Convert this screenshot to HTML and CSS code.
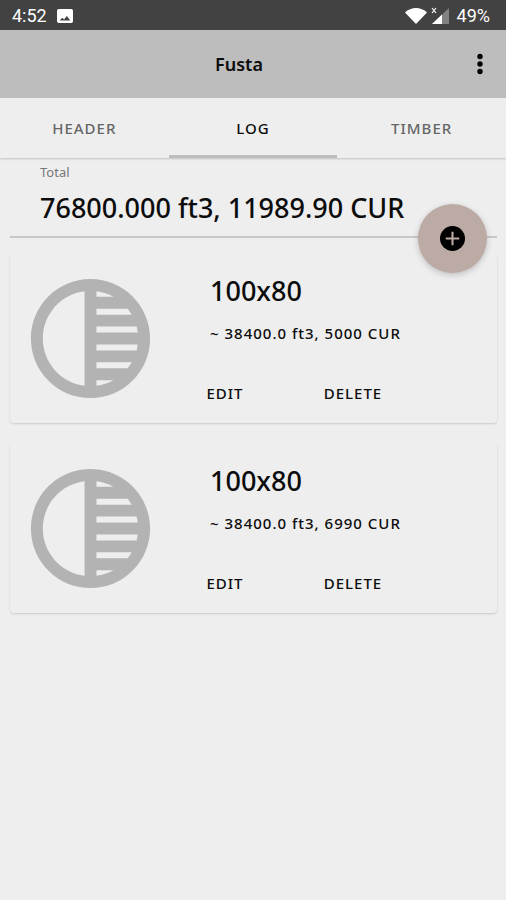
FILE: index.html
```html
<!DOCTYPE html>
<html lang="en">
<head>
<meta charset="utf-8">
<meta name="viewport" content="width=device-width, initial-scale=1">
<title>Fusta</title>
<link rel="stylesheet" href="styles.css">
</head>
<body>
<div class="status">
  <span>4:52</span>
  <svg class="status-photo" viewBox="0 0 18 18" aria-hidden="true"><path fill="#fff" fill-rule="evenodd" d="M2 1h14a2 2 0 0 1 2 2v12a2 2 0 0 1-2 2H2a2 2 0 0 1-2-2V3a2 2 0 0 1 2-2zm1 13h12l-4-5-3 4-2-2z"/></svg>
  <span class="status-space"></span>
  <svg class="status-wifi" viewBox="0 0 22 16" aria-hidden="true"><path fill="#fff" d="M11 16 0 4.500C6-1.500 16-1.500 22 4.500z"/></svg>
  <svg class="status-cell" viewBox="0 0 18 18" aria-hidden="true"><path fill="#828282" d="M18 1v16H1z"/><path fill="#fff" d="M11 7.600V17H1z"/><path stroke="#fff" stroke-width="1.200" d="m1 1 4 5M5 1 1 6"/></svg>
  <span>49%</span>
</div>
<header class="appbar">
  <h1>Fusta</h1>
  <button class="menu" type="button" aria-label="More options"><svg viewBox="0 0 6 22" aria-hidden="true"><circle cx="3" cy="3.500" r="2.700"/><circle cx="3" cy="11" r="2.700"/><circle cx="3" cy="18.500" r="2.700"/></svg></button>
</header>
<nav class="tabs">
  <a href="#header">HEADER</a>
  <a href="#log" class="active" aria-current="page">LOG</a>
  <a href="#timber">TIMBER</a>
</nav>
<main>
  <section class="total">
    <label for="total">Total</label>
    <input id="total" type="text" value="76800.000 ft3, 11989.90 CUR" readonly>
    <button class="add" type="button" aria-label="Add log"><svg viewBox="0 0 24 24" aria-hidden="true"><circle cx="12" cy="12" r="12"/><path stroke="#bcaaa4" stroke-width="2" d="M12 5.500v13M5.500 12h13"/></svg></button>
  </section>
  <article class="card">
    <svg class="tone" viewBox="0 0 24 24" aria-hidden="true"><path d="M12 2C6.480 2 2 6.480 2 12s4.480 10 10 10 10-4.480 10-10S17.520 2 12 2zm-1 17.930c-3.940-.490-7-3.850-7-7.930s3.050-7.440 7-7.930v15.860zm2-15.860c1.030.130 2 .450 2.870.930H13v-.930zM13 7h5.240c.250.310.480.650.680 1H13V7zm0 3h6.740c.080.330.150.660.190 1H13v-1zm0 9.930V19h2.870c-.870.480-1.840.800-2.870.930zM18.240 17H13v-1h5.920c-.200.350-.430.690-.680 1zm1.500-3H13v-1h6.930c-.040.340-.110.670-.190 1z"/></svg>
    <div class="info">
      <h2>100x80</h2>
      <p>~ 38400.0 ft3, 5000 CUR</p>
      <div class="actions"><button type="button">EDIT</button><button type="button">DELETE</button></div>
    </div>
  </article>
  <article class="card">
    <svg class="tone" viewBox="0 0 24 24" aria-hidden="true"><path d="M12 2C6.480 2 2 6.480 2 12s4.480 10 10 10 10-4.480 10-10S17.520 2 12 2zm-1 17.930c-3.940-.490-7-3.850-7-7.930s3.050-7.440 7-7.930v15.860zm2-15.860c1.030.130 2 .450 2.870.930H13v-.930zM13 7h5.240c.250.310.480.650.680 1H13V7zm0 3h6.740c.080.330.150.660.190 1H13v-1zm0 9.930V19h2.870c-.870.480-1.840.800-2.870.930zM18.240 17H13v-1h5.920c-.200.350-.430.690-.680 1zm1.500-3H13v-1h6.930c-.040.340-.110.670-.190 1z"/></svg>
    <div class="info">
      <h2>100x80</h2>
      <p>~ 38400.0 ft3, 6990 CUR</p>
      <div class="actions"><button type="button">EDIT</button><button type="button">DELETE</button></div>
    </div>
  </article>
</main>
</body>
</html>
```
FILE: styles.css
```css
* { box-sizing: border-box; }
body {
  margin: 0;
  min-height: 100vh;
  background: #eee;
  color: #0c0c0c;
  font-family: "Noto Sans", "Open Sans", sans-serif;
}
h1, h2, p { margin: 0; font-weight: 500; }
button { border: 0; padding: 0; background: none; color: inherit; font: inherit; cursor: pointer; }
svg { display: block; flex: none; }

.status {
  display: flex;
  align-items: center;
  height: 30px;
  padding: 2px 16px 0 12px;
  background: #424242;
  color: #fff;
  font: 18px/28px Roboto, sans-serif;
}
.status-photo { width: 16px; height: 16px; margin-left: 10px; }
.status-space { flex: 1; }
.status-wifi { width: 22px; height: 16px; }
.status-cell { width: 18px; height: 18px; margin: 0 8px 0 4px; }

.appbar {
  display: grid;
  grid-template-columns: 1fr auto 1fr;
  align-items: center;
  height: 68px;
  padding-right: 16px;
  background: #bdbdbd;
}
.appbar h1 { grid-column: 2; padding-right: 12px; font-size: 18px; font-weight: 600; line-height: 24px; }
.menu { justify-self: end; width: 20px; height: 40px; display: grid; place-items: center; }
.menu svg { width: 6px; height: 22px; }

.tabs {
  display: grid;
  grid-template-columns: repeat(3, 1fr);
  box-shadow: 0 1px 2px rgba(0, 0, 0, .2);
}
.tabs a {
  height: 60px;
  border-bottom: 3px solid transparent;
  color: #666;
  font-size: 15px;
  font-weight: 500;
  line-height: 60px;
  letter-spacing: 1px;
  text-align: center;
  text-decoration: none;
}
.tabs .active { border-color: #bdbdbd; color: #0c0c0c; }

main { display: flex; flex-direction: column; padding: 0 9px 0 10px; }
.total {
  position: relative;
  height: 80px;
  margin-bottom: 15px;
  padding: 4px 30px 0;
  border-bottom: 2px solid #c8c8c8;
}
.total label { display: block; color: #777; font-size: 13px; line-height: 20px; }
.total input {
  display: block;
  width: 100%;
  height: 40px;
  margin-top: 6px;
  padding: 0;
  border: 0;
  outline: 0;
  background: none;
  color: inherit;
  font: 500 27px/40px "Noto Sans", "Open Sans", sans-serif;
}
.add {
  position: absolute;
  right: 10px;
  bottom: -37px;
  display: grid;
  place-items: center;
  width: 69px;
  height: 69px;
  border-radius: 50%;
  background: #bcaaa4;
  box-shadow: 0 2px 6px rgba(0, 0, 0, .2);
}
.add svg { width: 25px; height: 25px; }

.card {
  display: flex;
  align-items: flex-start;
  gap: 48px;
  height: 170px;
  margin-bottom: 20px;
  padding: 14px 9px;
  border-radius: 4px;
  box-shadow: 0 1px 2px rgba(0, 0, 0, .15);
}
.tone { width: 143px; height: 143px; fill: #b3b3b3; }
.info { flex: 1; padding-top: 6px; }
.info h2 { font-size: 27px; line-height: 36px; }
.info p { margin-top: 12px; font-size: 15px; line-height: 24px; letter-spacing: 1px; }
.actions { display: grid; grid-template-columns: 104px 104px; gap: 24px; margin: 30px 0 0 -37px; }
.actions button { height: 36px; font-size: 15px; font-weight: 500; letter-spacing: 1px; text-align: center; }
```
